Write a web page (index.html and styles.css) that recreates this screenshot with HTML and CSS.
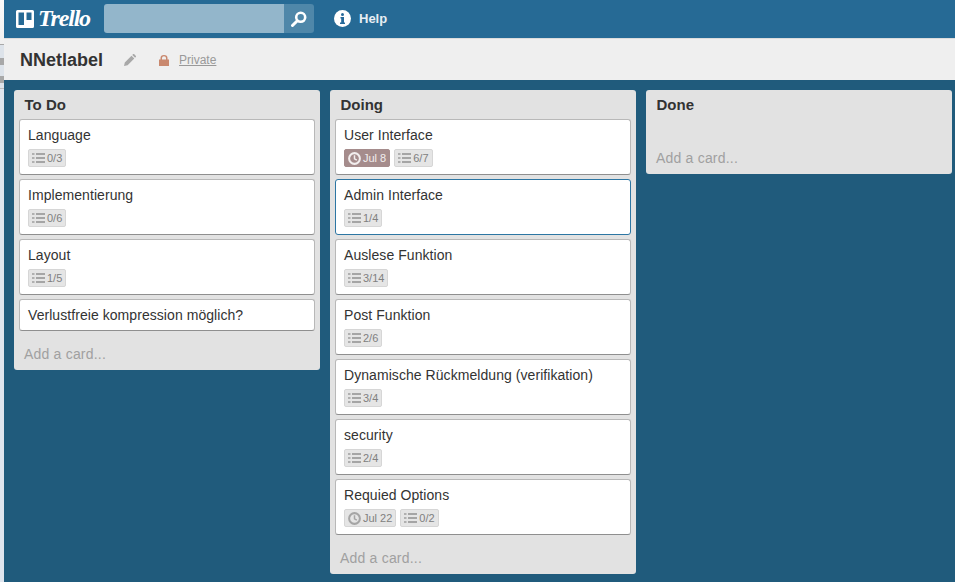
FILE: index.html
```html
<!DOCTYPE html>
<html lang="en">
<head>
    <meta charset="UTF-8">
    <title>NNetlabel</title>
    <link rel="stylesheet" href="styles.css">
</head>
<body>
    <svg width="0" height="0" class="defs">
        <symbol id="list-icon" viewBox="0 0 13 12">
            <path d="M0 1h2.500v2h-2.500zM0 5h2.500v2h-2.500zM0 9h2.500v2h-2.500z" fill="#b0b0b0"/>
            <path d="M4 1h9v2h-9zM4 5h9v2h-9zM4 9h9v2h-9z" fill="#a5a5a5"/>
        </symbol>
        <symbol id="clock-icon" viewBox="0 0 14 14">
            <circle cx="7" cy="7" r="5.800" fill="none" stroke="currentColor" stroke-width="2.200"/>
            <path d="M7 3.500v3.800l2.500 1.500" fill="none" stroke="currentColor" stroke-width="1.600"/>
        </symbol>
    </svg>

    <div class="edge"></div>

    <div class="app">
        <header class="top-bar">
            <div class="logo">
                <svg class="logo-mark" viewBox="0 0 18 18" width="18" height="18">
                    <path fill-rule="evenodd" fill="#fff" d="M1.500 0h15a1.500 1.500 0 0 1 1.500 1.500v15a1.500 1.500 0 0 1-1.500 1.500h-15a1.500 1.500 0 0 1-1.500-1.500v-15a1.500 1.500 0 0 1 1.500-1.500zM2.500 2.500v12.500h5.500v-12.500zM10.500 2.500v7.500h5v-7.500z"/>
                </svg>
                <span class="logo-text">Trello</span>
            </div>
            <div class="search">
                <div class="search-input"></div>
                <div class="search-btn">
                    <svg viewBox="0 0 16 16" width="16" height="16">
                        <circle cx="9.700" cy="6.300" r="4.500" fill="none" stroke="#fff" stroke-width="2.600"/>
                        <path d="M6.300 9.700l-4.800 4.800" stroke="#fff" stroke-width="3" stroke-linecap="round"/>
                    </svg>
                </div>
            </div>
            <div class="help">
                <svg viewBox="0 0 17 17" width="17" height="17">
                    <circle cx="8.500" cy="8.500" r="8.500" fill="#fff"/>
                    <circle cx="8.500" cy="4.500" r="1.500" fill="#26699a"/>
                    <path d="M6.500 7h3.500v5.500h1v1.500h-5v-1.500h1.200v-4h-.7z" fill="#26699a"/>
                </svg>
                <span>Help</span>
            </div>
        </header>

        <div class="board-bar">
            <h1 class="board-name">NNetlabel</h1>
            <svg class="pencil" viewBox="0 0 12 12" width="12" height="12">
                <path d="M0 12l.8-3.600 6.700-6.700 2.800 2.800-6.700 6.700zM8.300.9l.6-.6a1 1 0 0 1 1.400 0l1.400 1.400a1 1 0 0 1 0 1.400l-.6.600z" fill="#a8a8a8"/>
            </svg>
            <svg class="lock" viewBox="0 0 10 11" width="10" height="11">
                <path d="M0 4.500h1.500v-1.500a3.500 3 0 0 1 7 0v1.500h1.500v6.500h-10zM3 4.500h4v-1.500a2 1.700 0 0 0-4 0z" fill="#c9886e" fill-rule="evenodd"/>
            </svg>
            <a class="privacy">Private</a>
        </div>

        <main class="board">
            <section class="list">
                <h2>To Do</h2>
                <div class="card">
                    <div class="card-title">Language</div>
                    <div class="badges">
                        <span class="badge"><svg class="ic-list"><use href="#list-icon"/></svg>0/3</span>
                    </div>
                </div>
                <div class="card">
                    <div class="card-title">Implementierung</div>
                    <div class="badges">
                        <span class="badge"><svg class="ic-list"><use href="#list-icon"/></svg>0/6</span>
                    </div>
                </div>
                <div class="card">
                    <div class="card-title">Layout</div>
                    <div class="badges">
                        <span class="badge"><svg class="ic-list"><use href="#list-icon"/></svg>1/5</span>
                    </div>
                </div>
                <div class="card">
                    <div class="card-title">Verlustfreie kompression möglich?</div>
                </div>
                <div class="add-card">Add a card...</div>
            </section>

            <section class="list">
                <h2>Doing</h2>
                <div class="card">
                    <div class="card-title">User Interface</div>
                    <div class="badges">
                        <span class="badge due-past"><svg class="ic-clock"><use href="#clock-icon"/></svg>Jul 8</span>
                        <span class="badge"><svg class="ic-list"><use href="#list-icon"/></svg>6/7</span>
                    </div>
                </div>
                <div class="card active">
                    <div class="card-title">Admin Interface</div>
                    <div class="badges">
                        <span class="badge"><svg class="ic-list"><use href="#list-icon"/></svg>1/4</span>
                    </div>
                </div>
                <div class="card">
                    <div class="card-title">Auslese Funktion</div>
                    <div class="badges">
                        <span class="badge"><svg class="ic-list"><use href="#list-icon"/></svg>3/14</span>
                    </div>
                </div>
                <div class="card">
                    <div class="card-title">Post Funktion</div>
                    <div class="badges">
                        <span class="badge"><svg class="ic-list"><use href="#list-icon"/></svg>2/6</span>
                    </div>
                </div>
                <div class="card">
                    <div class="card-title">Dynamische Rückmeldung (verifikation)</div>
                    <div class="badges">
                        <span class="badge"><svg class="ic-list"><use href="#list-icon"/></svg>3/4</span>
                    </div>
                </div>
                <div class="card">
                    <div class="card-title">security</div>
                    <div class="badges">
                        <span class="badge"><svg class="ic-list"><use href="#list-icon"/></svg>2/4</span>
                    </div>
                </div>
                <div class="card">
                    <div class="card-title">Requied Options</div>
                    <div class="badges">
                        <span class="badge"><svg class="ic-clock"><use href="#clock-icon"/></svg>Jul 22</span>
                        <span class="badge"><svg class="ic-list"><use href="#list-icon"/></svg>0/2</span>
                    </div>
                </div>
                <div class="add-card">Add a card...</div>
            </section>

            <section class="list list-empty">
                <h2>Done</h2>
                <div class="add-card">Add a card...</div>
            </section>
        </main>
    </div>
</body>
</html>
```

FILE: styles.css
```css
html, body {
    height: 100%;
}
body {
    font-family: "Liberation Sans", Arial, sans-serif;
    margin: 0;
    height: 582px;
    overflow: hidden;
    display: flex;
    background-color: #205b7c;
    color: #333;
}
.defs {
    display: none;
}
/* sliver of the window behind, with a couple of grey tabs */
.edge {
    width: 4px;
    flex-shrink: 0;
    background: linear-gradient(
        #fafafa 0, #f0f0f0 44px,
        #a9a9a9 44px, #a9a9a9 45px,
        #dde3ea 45px, #dde3ea 58px,
        #a8a8a8 58px, #a8a8a8 65px,
        #dde3ea 65px, #dde3ea 76px,
        #a8a8a8 76px, #a8a8a8 83px,
        #dde3ea 83px, #dde3ea 88px,
        #bcbcbc 88px, #bcbcbc 89px,
        #dfe5ee 89px, #dfe5ee 100%
    );
}
.app {
    flex: 1;
    display: flex;
    flex-direction: column;
    min-width: 0;
}

/* top bar */
.top-bar {
    height: 38px;
    box-sizing: border-box;
    padding: 4px 0 5px 12px;
    display: flex;
    align-items: center;
    background-color: #266a95;
}
.logo {
    display: flex;
    align-items: center;
    width: 88px;
}
.logo-mark {
    flex-shrink: 0;
}
.logo-text {
    margin-left: 4px;
    font-family: "Liberation Serif", serif;
    font-style: italic;
    font-weight: bold;
    font-size: 24px;
    line-height: 29px;
    letter-spacing: -1.2px;
    color: #fff;
}
.search {
    display: flex;
    width: 210px;
    height: 29px;
    border-radius: 3px;
    overflow: hidden;
}
.search-input {
    flex: 1;
    background-color: #93b6cb;
}
.search-btn {
    width: 30px;
    display: flex;
    align-items: center;
    justify-content: center;
    background-color: #4f87a9;
}
.help {
    display: flex;
    align-items: center;
    gap: 8px;
    margin-left: 20px;
    font-size: 13px;
    font-weight: bold;
    color: #e6eef3;
}

/* board header */
.board-bar {
    height: 42px;
    box-sizing: border-box;
    padding: 1px 0 0 16px;
    border-top: 1px solid #dcdcdc;
    display: flex;
    align-items: center;
    background-color: #efefef;
}
.board-name {
    margin: 0;
    font-size: 18px;
    font-weight: bold;
    color: #333;
}
.pencil {
    margin-left: 21px;
}
.lock {
    margin-left: 23px;
}
.privacy {
    margin-left: 10px;
    font-size: 12px;
    color: #999;
    text-decoration: underline;
}

/* lists */
.board {
    flex: 1;
    display: flex;
    align-items: flex-start;
    gap: 10px;
    padding: 10px 0 0 10px;
}
.list {
    width: 306px;
    box-sizing: border-box;
    padding: 0 5px;
    background-color: #e2e2e2;
    border-radius: 3px;
}
.list h2 {
    margin: 0;
    padding: 6px 5.500px 0;
    height: 29px;
    box-sizing: border-box;
    font-size: 15px;
    line-height: 17px;
    font-weight: bold;
    color: #333;
}
.card {
    box-sizing: border-box;
    margin-bottom: 4px;
    padding: 7px 8px 0;
    min-height: 32px;
    background-color: #fff;
    border: 1px solid #b8b8b8;
    border-bottom-color: #8f8f8f;
    border-radius: 3px;
}
.card.active {
    border-color: #2d76a3;
}
.card-title {
    font-size: 14px;
    line-height: 17px;
    height: 21px;
    letter-spacing: .06px;
    color: #333;
}
.badges {
    display: flex;
    gap: 4px;
    height: 25px;
    margin-top: 1px;
}
.badge {
    height: 18px;
    box-sizing: border-box;
    padding: 0 3px;
    display: flex;
    align-items: center;
    gap: 2px;
    font-size: 11px;
    color: #808080;
    background-color: #e5e5e5;
    border: 1px solid #d6d6d6;
    border-radius: 2px;
}
.badge.due-past {
    color: #f2eeee;
    background-color: #a58c8c;
    border-color: #a58c8c;
}
.ic-list {
    width: 13px;
    height: 12px;
}
.ic-clock {
    width: 13px;
    height: 13px;
    color: #a5a5a5;
}
.due-past .ic-clock {
    color: #f2eeee;
}
.add-card {
    height: 31px;
    padding: 7px 5px 0;
    box-sizing: border-box;
    margin-top: 8px;
    font-size: 14px;
    line-height: 17px;
    letter-spacing: .2px;
    color: #a0a0a0;
}
.list-empty .add-card {
    margin-top: 24px;
}
```
